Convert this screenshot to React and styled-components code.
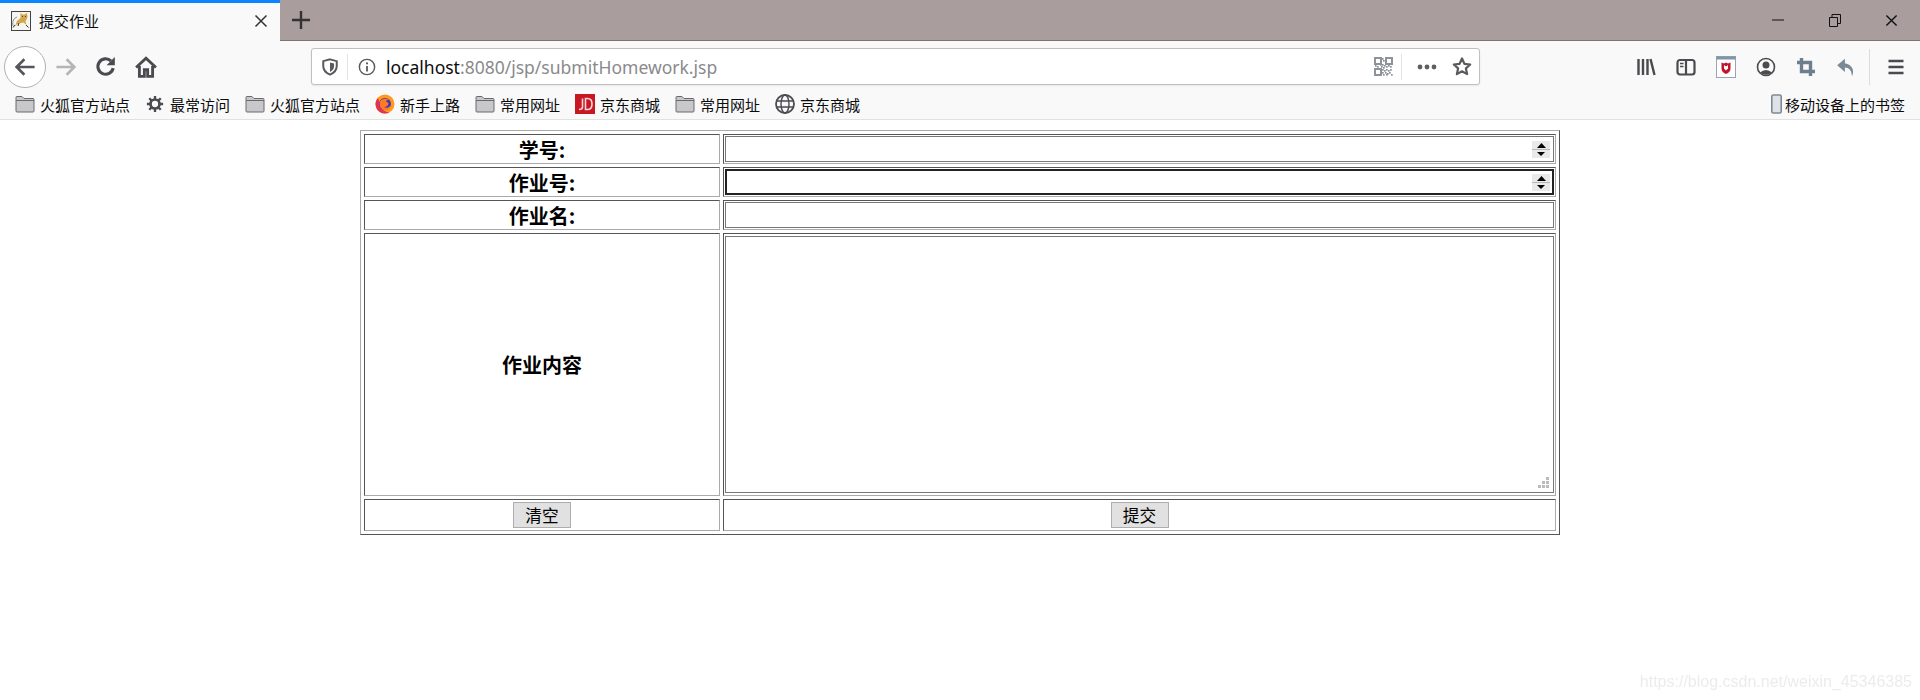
import React from 'react';
import styled, { createGlobalStyle } from 'styled-components';

const GlobalStyle = createGlobalStyle`
  html, body {
    margin: 0;
    padding: 0;
    background: #fff;
    overflow: hidden;
    font-family: "Noto Sans CJK SC", "Noto Sans", sans-serif;
  }
`;

const Page = styled.div`
  position: relative;
  width: 1920px;
  height: 700px;
  overflow: hidden;
`;

/* browser chrome */
const TabStrip = styled.div`
  display: flex;
  align-items: stretch;
  height: 41px;
  box-sizing: border-box;
  background: #aa9d9d;
  border-bottom: 1px solid #7f7272;
`;

const Tab = styled.div`
  display: flex;
  align-items: center;
  width: 280px;
  height: 41px;
  box-sizing: border-box;
  padding: 0 12px 3px 11px;
  background: #f9f9fa;
  border-top: 3px solid #0a84ff;
`;

const TabTitle = styled.span`
  flex: 1;
  margin-left: 8px;
  padding-bottom: 1px;
  font-size: 15px;
  color: #0c0c0d;
`;

const NewTab = styled.div`
  display: flex;
  align-items: center;
  justify-content: center;
  width: 42px;
`;

const WindowControls = styled.div`
  display: flex;
  margin-left: auto;
`;

const WindowButton = styled.div`
  display: flex;
  align-items: center;
  justify-content: center;
  width: 57px;
`;

const NavBar = styled.div`
  display: flex;
  align-items: center;
  height: 51px;
  padding: 0 4px;
  background: #f9f9fa;
`;

const BackButton = styled.div`
  display: flex;
  align-items: center;
  justify-content: center;
  width: 42px;
  height: 42px;
  box-sizing: border-box;
  background: #fff;
  border: 1px solid #b1b1b3;
  border-radius: 50%;
`;

const ToolButton = styled.div`
  display: flex;
  align-items: center;
  justify-content: center;
  flex: none;
  width: ${p => p.$w || 40}px;
  height: 36px;
`;

const AddressBar = styled.div`
  display: flex;
  align-items: center;
  width: 1169px;
  height: 37px;
  margin-left: 145px;
  padding-right: 7px;
  box-sizing: border-box;
  background: #fff;
  border: 1px solid #c0c0c2;
  border-radius: 3px;
  box-shadow: 0 1px 2px rgba(0, 0, 0, 0.08);
`;

const AddressDivider = styled.div`
  flex: none;
  width: 1px;
  height: 26px;
  background: #e3e3e4;
`;

const UrlText = styled.div`
  flex: 1;
  margin-left: 1px;
  font-family: "Noto Sans", sans-serif;
  font-size: 17.5px;
  color: #8a8a8d;
  white-space: nowrap;
  b {
    font-weight: 400;
    color: #0c0c0d;
  }
`;

const RightTools = styled.div`
  display: flex;
  align-items: center;
  margin-left: auto;
`;

const ToolDivider = styled.div`
  width: 1px;
  height: 36px;
  margin: 0 6px 0 3px;
  background: #dcdcdd;
`;

const BookmarkBar = styled.div`
  display: flex;
  align-items: center;
  gap: 15px;
  height: 28px;
  padding: 0 15px 3px;
  box-sizing: border-box;
  background: #f9f9fa;
  border-bottom: 1px solid #e1e1e2;
`;

const Bookmark = styled.div`
  display: flex;
  align-items: center;
  gap: 5px;
  font-size: 15px;
  color: #0c0c0d;
  white-space: nowrap;
`;

const BookmarkIcon = styled.span`
  display: flex;
  flex: none;
  align-items: center;
  justify-content: center;
  width: 20px;
  height: 20px;
`;

const MobileBookmark = styled(Bookmark)`
  gap: 3px;
  margin-left: auto;
`;

/* the form */
const FormTable = styled.table`
  width: 1200px;
  margin: 10px auto 0;
  box-sizing: border-box;
  table-layout: fixed;
  border-collapse: separate;
  border-spacing: 3px;
  border-width: 1px;
  border-style: solid;
  border-color: #aaa #555 #555 #aaa;
`;

const Cell = styled.td`
  height: ${p => p.$h}px;
  padding: 1px;
  box-sizing: border-box;
  line-height: 24px;
  text-align: center;
  vertical-align: middle;
  border-width: 1px;
  border-style: solid;
  border-color: #555 #aaa #aaa #555;
`;

const LabelCell = styled(Cell)`
  width: 356px;
  padding-top: 2px;
  font-size: 20px;
  font-weight: 700;
  color: #000;
`;

const FieldBox = styled.div`
  position: relative;
  display: flex;
`;

const TextField = styled.input`
  width: 100%;
  height: 26px;
  padding: 0 3px;
  box-sizing: border-box;
  background: #fff;
  outline: none;
  border: ${p => (p.$focused ? '2px solid #222' : '1px solid #777')};
`;

const TextArea = styled.textarea`
  display: block;
  width: 100%;
  height: 257px;
  padding: 2px;
  box-sizing: border-box;
  background: #fff;
  outline: none;
  resize: none;
  border: 1px solid #777;
`;

const Spinner = styled.div`
  position: absolute;
  top: 5px;
  right: 4px;
  display: flex;
  flex-direction: column;
  gap: 1px;
  width: 18px;
  height: 17px;
  background: #b8b8b8;
`;

const SpinButton = styled.div`
  display: flex;
  flex: 1;
  align-items: center;
  justify-content: center;
  background: #e9e9e9;
`;

const ResizeGrip = styled.svg`
  position: absolute;
  right: 4px;
  bottom: 4px;
`;

const FormButton = styled.button`
  display: block;
  width: 58px;
  height: 26px;
  margin: 0 auto;
  padding: 0;
  box-sizing: border-box;
  background: #e1e1e1;
  border: 1px solid #adadad;
  font-family: "Noto Sans CJK SC", sans-serif;
  font-size: 16.7px;
  line-height: 1;
  color: #000;
`;

const Watermark = styled.div`
  position: absolute;
  right: 8px;
  bottom: 9px;
  font-family: "Liberation Sans", sans-serif;
  font-size: 16px;
  color: #ececec;
  filter: blur(0.4px);
`;

const Dark = '#4a4a4f';

const Icon = ({ size = 20, children, ...rest }) => (
  <svg width={size} height={size} viewBox="0 0 20 20" fill="none" {...rest}>{children}</svg>
);

// tomcat favicon
const Favicon = () => (
  <svg width="20" height="20" viewBox="0 0 20 20" style={{ flex: 'none' }}>
    <rect x="0.5" y="0.5" width="19" height="19" fill="#f6f5f0" stroke="#444" />
    <path d="M2 15C1 10 3 7 6 6" stroke="#8a8a8a" strokeWidth="1" fill="none" />
    <path d="M9.500 2l2 1.500h2L16 2l.5 4-1 2.500-1 2 1 3.500-3-2.500-5 1-3.500 2.500L6 10l3.500-3z" fill="#d3a64c" />
    <path d="M11 5.500h.8M14 5.500h.8" stroke="#333" strokeWidth="1" />
    <path d="M4 14l-2 2.500M15 14l2.500 2.500M8 12l-1 3" stroke="#333" strokeWidth="1" />
  </svg>
);

const CloseIcon = ({ size = 14, color = '#333' }) => (
  <svg width={size} height={size} viewBox="0 0 14 14" style={{ flex: 'none' }}>
    <path d="M1.500 1.500l11 11M12.500 1.500l-11 11" stroke={color} strokeWidth="1.500" />
  </svg>
);

const FolderIcon = () => (
  <Icon>
    <path d="M1 5.500V3.500Q1 2.500 2 2.500H7L9 4.500H18Q19 4.500 19 5.500V17Q19 18 18 18H2Q1 18 1 17Z" fill="#c8c8ca" stroke="#6a6a6e" strokeWidth="1" />
    <path d="M1 6.500H19" stroke="#6a6a6e" strokeWidth="1" />
  </Icon>
);

const GearIcon = () => (
  <Icon size={18}>
    <circle cx="10" cy="10" r="5" stroke={Dark} strokeWidth="3" />
    <path d="M10 1v4M10 15v4M1 10h4M15 10h4M3.600 3.600l2.900 2.900M13.500 13.500l2.900 2.900M16.400 3.600l-2.900 2.900M6.500 13.500l-2.900 2.900" stroke={Dark} strokeWidth="2.600" />
  </Icon>
);

const FirefoxIcon = () => (
  <Icon>
    <circle cx="10" cy="10" r="9.500" fill="#ff9a1f" />
    <path d="M.5 10a9.500 9.500 0 0 0 14 8.400C9 18 4 14 4.500 9 4 6 3 5 3 4 1.500 5.500.5 7.500.5 10z" fill="#e5304f" />
    <circle cx="10" cy="10" r="6" fill="#4136b8" />
    <path d="M5 7.500c2-3 6-3.500 9-1.500-2 0-3 .5-3 1.500l2.500 1.500c0 2.500-2 4-4.500 4 2.500 1.500 6 .5 7.500-2.500C16 14 13 16 10 16 6.500 16 3.500 12 5 7.500z" fill="#ff7a22" />
  </Icon>
);

const JdIcon = () => (
  <svg width="20" height="20" viewBox="0 0 20 20">
    <rect width="20" height="20" fill="#c91623" />
    <path d="M7.500 4.500V13Q7.500 15.500 4 15.500" stroke="#f6d5d8" strokeWidth="1.600" fill="none" />
    <path d="M10.500 4.500V15.500H12.500Q17 15.500 17 10T12.500 4.500Z" stroke="#f6d5d8" strokeWidth="1.600" fill="none" />
  </svg>
);

const GlobeIcon = () => (
  <Icon>
    <circle cx="10" cy="10" r="9" stroke={Dark} strokeWidth="1.800" />
    <ellipse cx="10" cy="10" rx="4" ry="9" stroke={Dark} strokeWidth="1.400" />
    <path d="M1.500 7h17M1.500 13h17" stroke={Dark} strokeWidth="1.400" />
  </Icon>
);

const QrIcon = () => {
  const cells = [[8, 1], [9, 3], [1, 8], [3, 9], [6, 7], [8, 7], [10, 8], [7, 9], [9, 10], [12, 9], [14, 8], [16, 9], [8, 12], [10, 13], [8, 15], [9, 17], [12, 12], [14, 13], [16, 12], [11, 15], [13, 16], [15, 15], [17, 17], [12, 17]];
  return (
    <Icon size={20}>
      <path d="M1 1h6v6H1zM12 1h6v6h-6zM1 12h6v6H1z" stroke="#8c939b" strokeWidth="2" />
      {cells.map(([x, y]) => <rect key={`${x}-${y}`} x={x} y={y} width="1.700" height="1.700" fill="#8c939b" />)}
    </Icon>
  );
};

const McAfeeIcon = () => (
  <svg width="20" height="22" viewBox="0 0 20 22">
    <rect x=".5" y=".5" width="19" height="21" fill="#fff" stroke="#9aa4ad" />
    <rect x=".5" y=".5" width="19" height="3" fill="#7f95a8" />
    <path d="M5.500 6.500L8 7.500 10 6.500 12 7.500 14.500 6.500V12.500Q14.500 16 10 18 5.500 16 5.500 12.500Z" fill="#c3122f" />
    <path d="M8 9v3.500L10 14.500 12 12.500V9L10 10.500Z" fill="#fff" />
  </svg>
);

const tabs = [
  { id: 1, icon: <FolderIcon />, label: '火狐官方站点' },
  { id: 2, icon: <GearIcon />, label: '最常访问' },
  { id: 3, icon: <FolderIcon />, label: '火狐官方站点' },
  { id: 4, icon: <FirefoxIcon />, label: '新手上路' },
  { id: 5, icon: <FolderIcon />, label: '常用网址' },
  { id: 6, icon: <JdIcon />, label: '京东商城' },
  { id: 7, icon: <FolderIcon />, label: '常用网址' },
  { id: 8, icon: <GlobeIcon />, label: '京东商城' },
];

const SpinField = ({ focused }) => (
  <FieldBox>
    <TextField $focused={focused} readOnly />
    <Spinner>
      <SpinButton>
        <svg width="9" height="5" viewBox="0 0 9 5"><path d="M4.500 0L9 5H0z" fill="#000" /></svg>
      </SpinButton>
      <SpinButton>
        <svg width="8" height="4" viewBox="0 0 8 4"><path d="M0 0H8L4 4z" fill="#000" /></svg>
      </SpinButton>
    </Spinner>
  </FieldBox>
);

export default function App() {
  return (
    <Page>
      <GlobalStyle />
      <TabStrip>
        <Tab>
          <Favicon />
          <TabTitle>提交作业</TabTitle>
          <CloseIcon size={14} />
        </Tab>
        <NewTab>
          <svg width="18" height="18" viewBox="0 0 18 18">
            <path d="M9 0v18M0 9h18" stroke="#333" strokeWidth="2.400" />
          </svg>
        </NewTab>
        <WindowControls>
          <WindowButton>
            <svg width="12" height="2" viewBox="0 0 12 2"><path d="M0 1h12" stroke="#111" /></svg>
          </WindowButton>
          <WindowButton>
            <svg width="12" height="13" viewBox="0 0 12 13">
              <path d="M.5 3.500h8v9h-8zM3 3.500V.5h8.500v9H8.500" stroke="#111" fill="none" />
            </svg>
          </WindowButton>
          <WindowButton>
            <CloseIcon size={13} color="#111" />
          </WindowButton>
        </WindowControls>
      </TabStrip>

      <NavBar>
        <BackButton>
          <Icon size={24}>
            <path d="M18 10H3.500M9.500 3.500L3 10l6.500 6.500" stroke="#56565a" strokeWidth="2.200" />
          </Icon>
        </BackButton>
        <ToolButton>
          <Icon size={24}>
            <path d="M2 10h14.500M10.500 3.500L17 10l-6.500 6.500" stroke="#b5b5b8" strokeWidth="2.200" />
          </Icon>
        </ToolButton>
        <ToolButton>
          <Icon size={22}>
            <path d="M16.500 11A7 7 0 1 1 14.500 4.500" stroke={Dark} strokeWidth="2.800" />
            <path d="M18 1v7.500h-7.500z" fill={Dark} />
          </Icon>
        </ToolButton>
        <ToolButton>
          <Icon size={22}>
            <path d="M1 10.500L10 2l9 8.500" stroke={Dark} strokeWidth="2.600" />
            <path d="M4 9V18.500H8.500V12.500H11.500V18.500H16V9" stroke={Dark} strokeWidth="2.600" />
          </Icon>
        </ToolButton>

        <AddressBar>
          <ToolButton $w={35}>
            <Icon size={18}>
              <path d="M10 1.500L17.500 3.500V9Q17.500 15.500 10 18.500 2.500 15.500 2.500 9V3.500Z" stroke="#5a5a5e" strokeWidth="2.200" />
              <path d="M10 5L14.500 6V9.500Q14.500 13 10 15.500Z" fill="#5a5a5e" />
            </Icon>
          </ToolButton>
          <AddressDivider />
          <ToolButton $w={37}>
            <Icon size={18}>
              <circle cx="10" cy="10" r="8.500" stroke="#5a5a5e" strokeWidth="1.600" />
              <path d="M10 9v6" stroke="#5a5a5e" strokeWidth="2" />
              <circle cx="10" cy="6" r="1.200" fill="#5a5a5e" />
            </Icon>
          </ToolButton>
          <UrlText><b>localhost</b>:8080/jsp/submitHomework.jsp</UrlText>
          <ToolButton $w={34}><QrIcon /></ToolButton>
          <AddressDivider />
          <ToolButton $w={50}>
            <svg width="20" height="6" viewBox="0 0 20 6">
              <circle cx="3" cy="3" r="2.400" fill="#5f5f63" />
              <circle cx="10" cy="3" r="2.400" fill="#5f5f63" />
              <circle cx="17" cy="3" r="2.400" fill="#5f5f63" />
            </svg>
          </ToolButton>
          <ToolButton $w={20}>
            <Icon size={21}>
              <path d="M10 2l2.400 5.300 5.800.7-4.300 3.900 1.200 5.700L10 14.800l-5.100 2.800 1.200-5.700L1.800 8l5.800-.7z" stroke="#5a5a5e" strokeWidth="2.200" strokeLinejoin="round" />
            </Icon>
          </ToolButton>
        </AddressBar>

        <RightTools>
          <ToolButton>
            <Icon>
              <path d="M2.500 2v16M7 2v16M11.500 2v16M14.500 2l4 16" stroke={Dark} strokeWidth="2.400" />
            </Icon>
          </ToolButton>
          <ToolButton>
            <Icon>
              <rect x="1.500" y="3" width="17" height="14.500" rx="2.500" stroke={Dark} strokeWidth="2.200" />
              <path d="M10 3v14.500" stroke={Dark} strokeWidth="2.200" />
              <path d="M4 6.500h3.500M4 9.500h3.500" stroke={Dark} strokeWidth="1.400" />
            </Icon>
          </ToolButton>
          <ToolButton><McAfeeIcon /></ToolButton>
          <ToolButton>
            <Icon>
              <circle cx="10" cy="10" r="8.500" stroke={Dark} strokeWidth="1.600" />
              <circle cx="10" cy="8" r="3.500" fill={Dark} />
              <path d="M4 15.500Q10 10.500 16 15.500 10 20 4 15.500z" fill={Dark} />
            </Icon>
          </ToolButton>
          <ToolButton>
            <Icon>
              <path d="M5.500 1v13.500H19M1 5.500h13.500V19" stroke="#6f7e8c" strokeWidth="3.400" />
            </Icon>
          </ToolButton>
          <ToolButton>
            <Icon size={22}>
              <path d="M9 2.500L2 8.500 9 14.500V10.500Q15 10.500 15.500 18.500 19 9 9 6.500z" fill="#7c8a97" />
            </Icon>
          </ToolButton>
          <ToolDivider />
          <ToolButton>
            <Icon>
              <path d="M2.500 4h15M2.500 10h15M2.500 16h15" stroke={Dark} strokeWidth="2.400" />
            </Icon>
          </ToolButton>
        </RightTools>
      </NavBar>

      <BookmarkBar>
        {tabs.map(t => <Bookmark key={t.id}><BookmarkIcon>{t.icon}</BookmarkIcon>{t.label}</Bookmark>)}
        <MobileBookmark>
          <svg width="11" height="20" viewBox="0 0 11 20">
            <rect x=".8" y="1" width="9.400" height="18" rx="1.500" fill="#dfe3e7" stroke="#7c8a97" strokeWidth="1.600" />
          </svg>
          移动设备上的书签
        </MobileBookmark>
      </BookmarkBar>

      <FormTable>
        <tbody>
          <tr>
            <LabelCell $h={30}>学号:</LabelCell>
            <Cell $h={30}><SpinField /></Cell>
          </tr>
          <tr>
            <LabelCell $h={30}>作业号:</LabelCell>
            <Cell $h={30}><SpinField focused /></Cell>
          </tr>
          <tr>
            <LabelCell $h={30}>作业名:</LabelCell>
            <Cell $h={30}><FieldBox><TextField readOnly /></FieldBox></Cell>
          </tr>
          <tr>
            <LabelCell $h={263}>作业内容</LabelCell>
            <Cell $h={263}>
              <FieldBox>
                <TextArea readOnly />
                <ResizeGrip width="12" height="12" viewBox="0 0 12 12">
                  <path d="M8 0h3v3H8zM4 4h3v3H4zM8 4h3v3H8zM0 8h3v3H0zM4 8h3v3H4zM8 8h3v3H8z" fill="#bbb" />
                </ResizeGrip>
              </FieldBox>
            </Cell>
          </tr>
          <tr>
            <Cell $h={32}><FormButton>清空</FormButton></Cell>
            <Cell $h={32}><FormButton>提交</FormButton></Cell>
          </tr>
        </tbody>
      </FormTable>

      <Watermark>https://blog.csdn.net/weixin_45346385</Watermark>
    </Page>
  );
}
